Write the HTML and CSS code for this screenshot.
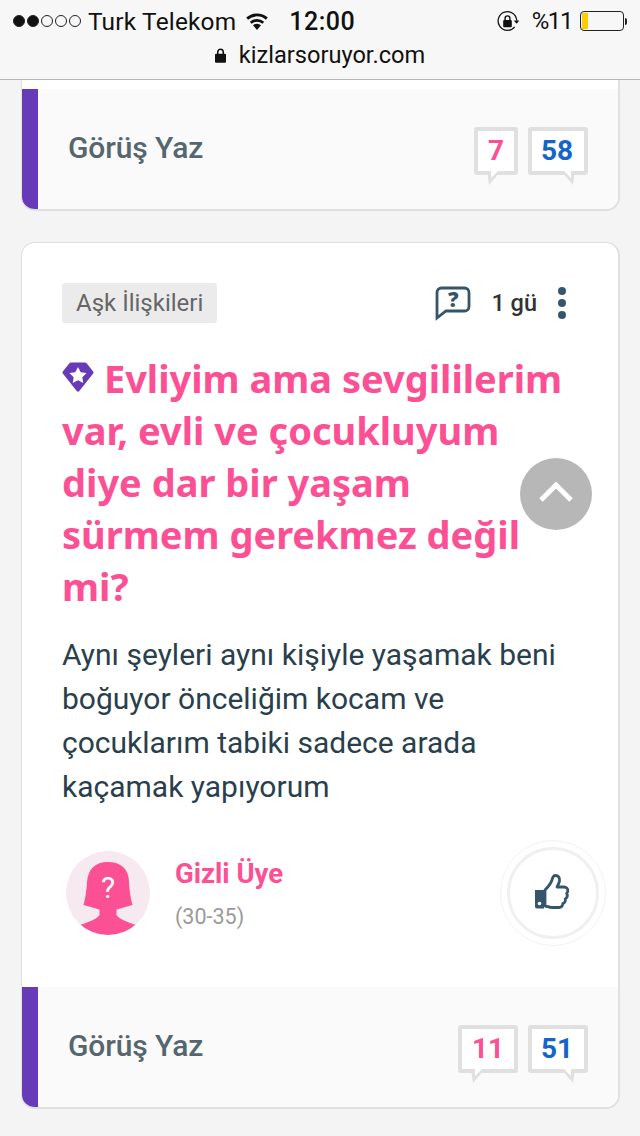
FILE: index.html
```html
<!DOCTYPE html>
<html lang="tr">
<head>
<meta charset="utf-8">
<title>kizlarsoruyor.com</title>
<link rel="stylesheet" href="styles.css">
</head>
<body>
<header class="topbar">
  <div class="status">
    <div class="status-left">
      <span class="signal"><i class="on"></i><i class="on"></i><i></i><i></i><i></i></span>
      <span class="carrier">Turk Telekom</span>
      <svg class="wifi" viewBox="0 0 24 18" width="24" height="18"><path d="M12 18l-4-4.700a6 6 0 0 1 8 0z" fill="#111"/><path d="M6.600 11.800a8.200 8.200 0 0 1 10.800 0l1.800-2.100a11 11 0 0 0-14.400 0z" fill="#111"/><path d="M3.100 7.700a13.500 13.500 0 0 1 17.800 0l1.900-2.200a16.400 16.400 0 0 0-21.600 0z" fill="#111"/></svg>
      <span class="clock">12:00</span>
    </div>
    <div class="status-right">
      <svg class="lockrot" viewBox="0 0 24 24" width="23" height="23"><path d="M19.500 17.500A9.700 9.700 0 1 1 21.600 11" fill="none" stroke="#111" stroke-width="1.300"/><path d="M18.500 11h6l-3 3.400z" fill="#111"/><rect x="7.500" y="10.500" width="9" height="7.500" rx="1" fill="#111"/><path d="M9.500 10.500V8.600a2.500 2.500 0 0 1 5 0v1.900" fill="none" stroke="#111" stroke-width="1.500"/></svg>
      <span class="percent">%11</span>
      <span class="battery"><span class="battery-level"></span></span>
      <span class="battery-tip"></span>
    </div>
  </div>
  <div class="address">
    <svg viewBox="0 0 12 16" width="11" height="15"><rect y="6" width="12" height="10" rx="1.200" fill="#111"/><path d="M3 6.500V4.200a3 3 0 0 1 6 0v2.300" fill="none" stroke="#111" stroke-width="1.700"/></svg>
    <span>kizlarsoruyor.com</span>
  </div>
</header>

<main class="feed">
  <section class="card card-clipped">
    <footer class="card-foot">
      <span class="write">Görüş Yaz</span>
      <div class="counts">
        <span class="bubble bubble-left pink narrow">7</span>
        <span class="bubble bubble-right blue">58</span>
      </div>
    </footer>
  </section>

  <section class="card">
    <div class="card-body">
      <div class="meta">
        <span class="tag">Aşk İlişkileri</span>
        <div class="meta-right">
          <span class="q-icon">
            <svg viewBox="0 0 36 36" width="36" height="36"><path d="M2 33V7.500A4.500 4.500 0 0 1 6.500 3h23A4.500 4.500 0 0 1 34 7.500v14a4.500 4.500 0 0 1-4.500 4.500H11z" fill="none" stroke="#34556b" stroke-width="2.800"/></svg>
            <span class="q-mark">?</span>
          </span>
          <span class="age">1 gü</span>
          <span class="dots"><i></i><i></i><i></i></span>
        </div>
      </div>
      <h1 class="title">
        <svg class="gem" viewBox="0 0 32 30" width="32" height="30"><path d="M9 .5h14a2 2 0 0 1 1.600.8l6.400 8a2 2 0 0 1 0 2.500L17.500 28.800a2 2 0 0 1-3 0L1 11.800a2 2 0 0 1 0-2.500l6.400-8A2 2 0 0 1 9 .5z" fill="#673ab7"/><path d="M16 5l2.700 5.300 5.900.8-4.300 4.100 1 5.800-5.300-2.800-5.300 2.800 1-5.800-4.300-4.100 5.900-.8z" fill="#fff"/></svg>
        Evliyim ama sevgililerim var, evli ve çocukluyum diye dar bir yaşam sürmem gerekmez değil mi?
      </h1>
      <p class="text">Aynı şeyleri aynı kişiyle yaşamak beni boğuyor önceliğim kocam ve çocuklarım tabiki sadece arada kaçamak yapıyorum</p>
      <div class="author">
        <span class="avatar">
          <svg viewBox="0 0 84 84" width="84" height="84">
            <defs><clipPath id="circle"><circle cx="42" cy="42" r="42"/></clipPath></defs>
            <circle cx="42" cy="42" r="42" fill="#f6e9ef"/>
            <path clip-path="url(#circle)" d="M42 11c-13 0-20 7-21 20-.6 9-1.500 16-3.500 23l16 4.500V64C30 69 22 71 14 74v10h56V74c-8-3-16-5-19.500-10v-5.500l16-4.500c-2-7-3-14-3.500-23C63 18 55 11 42 11z" fill="#fb5094"/>
          </svg>
          <span class="avatar-q">?</span>
        </span>
        <div class="author-info">
          <span class="author-name">Gizli Üye</span>
          <span class="author-age">(30-35)</span>
        </div>
        <div class="like">
          <div class="like-ring">
            <svg viewBox="0 0 36 38" width="36" height="38"><path d="M11 16c3-3 6-7 7-10 .5-2.500 1.500-4.500 3.500-4.500 3 0 4.500 2.500 4 5.500-.3 2-1.500 4-2.500 6h7c2.500 0 4 1.700 3.800 3.800 0 1-.5 2-1.200 2.700.8 1 .9 2.600.2 3.800-.4.800-1 1.300-1.600 1.600.4 1.200.2 2.500-.6 3.500-.5.600-1.200 1-1.800 1.100.2 2-1.300 4-3.800 4H18c-3 0-5-1.500-7-1.500z" fill="#fff" stroke="#34556b" stroke-width="2.800" stroke-linejoin="round"/><path d="M1 16h9v18.500H3a2 2 0 0 1-2-2z" fill="#34556b"/><circle cx="5.500" cy="29.500" r="1.800" fill="#fff"/></svg>
          </div>
        </div>
      </div>
    </div>
    <footer class="card-foot">
      <span class="write">Görüş Yaz</span>
      <div class="counts">
        <span class="bubble bubble-left pink">11</span>
        <span class="bubble bubble-right blue">51</span>
      </div>
    </footer>
  </section>
</main>

<button class="to-top" type="button" aria-label="Yukarı">
  <svg viewBox="0 0 36 22" width="36" height="22"><path d="M3 19L18 4l15 15" fill="none" stroke="#fff" stroke-width="5"/></svg>
</button>
</body>
</html>
```
FILE: styles.css
```css
* { box-sizing: border-box; }
html, body { margin: 0; padding: 0; }
body {
  width: 640px;
  height: 1136px;
  overflow: hidden;
  position: relative;
  background: #f4f4f4;
  font-family: Roboto, "Noto Sans", sans-serif;
}

.topbar {
  height: 80px;
  background: #f8f7f7;
  border-bottom: 1px solid #b6b6b6;
  padding: 6px 0 0;
  color: #111;
}
.status {
  display: flex;
  justify-content: space-between;
  align-items: center;
  height: 30px;
  padding: 0 13px;
}
.status-left, .status-right { display: flex; align-items: center; }
.signal { display: flex; gap: 2px; margin-right: 7px; }
.signal i {
  width: 12px;
  height: 12px;
  border-radius: 50%;
  border: 1px solid #222;
}
.signal i.on { background: #111; }
.carrier { font-size: 24.400px; letter-spacing: .2px; }
.wifi { margin-left: 9px; }
.clock { font-size: 25px; font-weight: 500; letter-spacing: .5px; margin-left: 20px; }
.lockrot { margin-right: 13px; }
.percent { font-size: 24px; letter-spacing: -1.400px; }
.battery {
  display: block;
  width: 44px;
  height: 20px;
  margin-left: 8px;
  border: 1px solid #222;
  border-radius: 4px;
  padding: 1px;
}
.battery-level { display: block; width: 6px; height: 16px; background: #ffcc00; }
.battery-tip { width: 2px; height: 7px; margin-left: 1px; background: #222; border-radius: 0 2px 2px 0; }

.address {
  display: flex;
  justify-content: center;
  align-items: center;
  gap: 13px;
  height: 36px;
  margin-top: 1px;
  font-size: 23.600px;
}

.feed {
  display: flex;
  flex-direction: column;
  gap: 31px;
  padding: 0 20px 0 21px;
}
.card {
  background: #fff;
  border: 1px solid #e0e0e0;
  border-width: 1px 2px 2px 1px;
  border-radius: 14px;
  overflow: hidden;
}
.card-clipped {
  border-top: 0;
  border-radius: 0 0 14px 14px;
  padding-top: 9px;
}
.card-foot {
  height: 120px;
  background: #fafafa;
  border-left: 16px solid #673ab7;
  display: flex;
  align-items: flex-start;
  justify-content: space-between;
  padding: 38px 30px 0 30px;
}
.write {
  font-size: 30px;
  font-weight: 500;
  line-height: 42px;
  letter-spacing: -.1px;
  color: #56666f;
}
.counts { display: flex; gap: 10px; }
.bubble {
  position: relative;
  display: block;
  width: 60px;
  height: 48px;
  border: 4px solid #e0e0e0;
  border-radius: 3px;
  font-size: 28px;
  font-weight: 700;
  line-height: 40px;
  text-align: center;
  background: #fff;
}
.narrow { width: 44px; }
.pink { color: #fb5094; }
.blue { color: #1565c8; padding-right: 2px; }
.bubble::after, .bubble::before {
  content: "";
  position: absolute;
}
.bubble::after {
  top: 40px;
  width: 14px;
  height: 14px;
  background: #e0e0e0;
}
.bubble::before {
  z-index: 1;
  top: 39px;
  width: 8px;
  height: 8px;
  background: #fff;
}
.bubble-left::after {
  left: 9px;
  clip-path: polygon(0 0, 100% 0, 2px 100%);
}
.bubble-left::before {
  left: 13px;
  clip-path: polygon(0 0, 100% 0, 0 100%);
}
.bubble-right::after {
  right: 9px;
  clip-path: polygon(0 0, 100% 0, 12px 100%);
}
.bubble-right::before {
  right: 13px;
  clip-path: polygon(0 0, 100% 0, 100% 100%);
}

.card-body { padding: 40px 40px 0; }
.meta {
  display: flex;
  justify-content: space-between;
  align-items: center;
  height: 40px;
}
.tag {
  background: #ebebeb;
  color: #666;
  font-size: 24px;
  line-height: 40px;
  height: 40px;
  padding: 0 14px;
  border-radius: 3px;
}
.meta-right { display: flex; align-items: center; }
.q-icon {
  position: relative;
  display: flex;
  width: 36px;
  height: 36px;
  margin-right: 20px;
}
.q-mark {
  position: absolute;
  left: 0;
  top: 3px;
  width: 36px;
  text-align: center;
  font: 800 21px/22px "Open Sans", sans-serif;
  color: #34556b;
}
.age { font-size: 23.500px; font-weight: 500; color: #333; margin-right: 21px; }
.dots { display: flex; flex-direction: column; gap: 4px; margin-right: 12px; }
.dots i { width: 8px; height: 8px; border-radius: 50%; background: #34556b; }

.title {
  margin: 29px 0 0;
  font-family: "Noto Sans", "Open Sans", sans-serif;
  font-size: 38px;
  font-weight: 700;
  line-height: 52px;
  color: #fb5094;
}
.gem { vertical-align: 1px; margin-right: 0; }
.text {
  margin: 21px 0 0;
  font-size: 30px;
  line-height: 44px;
  color: #2a3f4d;
}
.author {
  display: flex;
  align-items: flex-start;
  margin: 42px 0 0 4px;
  height: 136px;
  position: relative;
}
.avatar {
  position: relative;
  flex: none;
  display: flex;
  width: 84px;
  height: 84px;
}
.avatar-q {
  position: absolute;
  left: 0;
  top: 19px;
  width: 84px;
  text-align: center;
  font: 400 30px/36px Roboto, sans-serif;
  color: #fff;
}
.author-info {
  display: flex;
  flex-direction: column;
  margin-left: 25px;
}
.author-name { font-size: 27.500px; font-weight: 700; color: #fb5094; line-height: 44px; padding-top: 1px; }
.author-age { font-size: 21.500px; color: #9a9a9a; line-height: 38px; margin-top: 2px; }
.like {
  position: absolute;
  right: -28px;
  top: -11px;
  width: 106px;
  height: 106px;
  border: 1px solid #f2f3f4;
  border-radius: 50%;
  display: flex;
  align-items: center;
  justify-content: center;
}
.like-ring {
  width: 92px;
  height: 92px;
  border: 3px solid #eef0f1;
  border-radius: 50%;
  padding-right: 3px;
  display: flex;
  align-items: center;
  justify-content: center;
}

.to-top {
  position: absolute;
  left: 520px;
  top: 458px;
  width: 72px;
  height: 72px;
  border: 0;
  padding: 0 0 4px;
  border-radius: 50%;
  background: #b7b7b7;
  display: flex;
  align-items: center;
  justify-content: center;
}
```
